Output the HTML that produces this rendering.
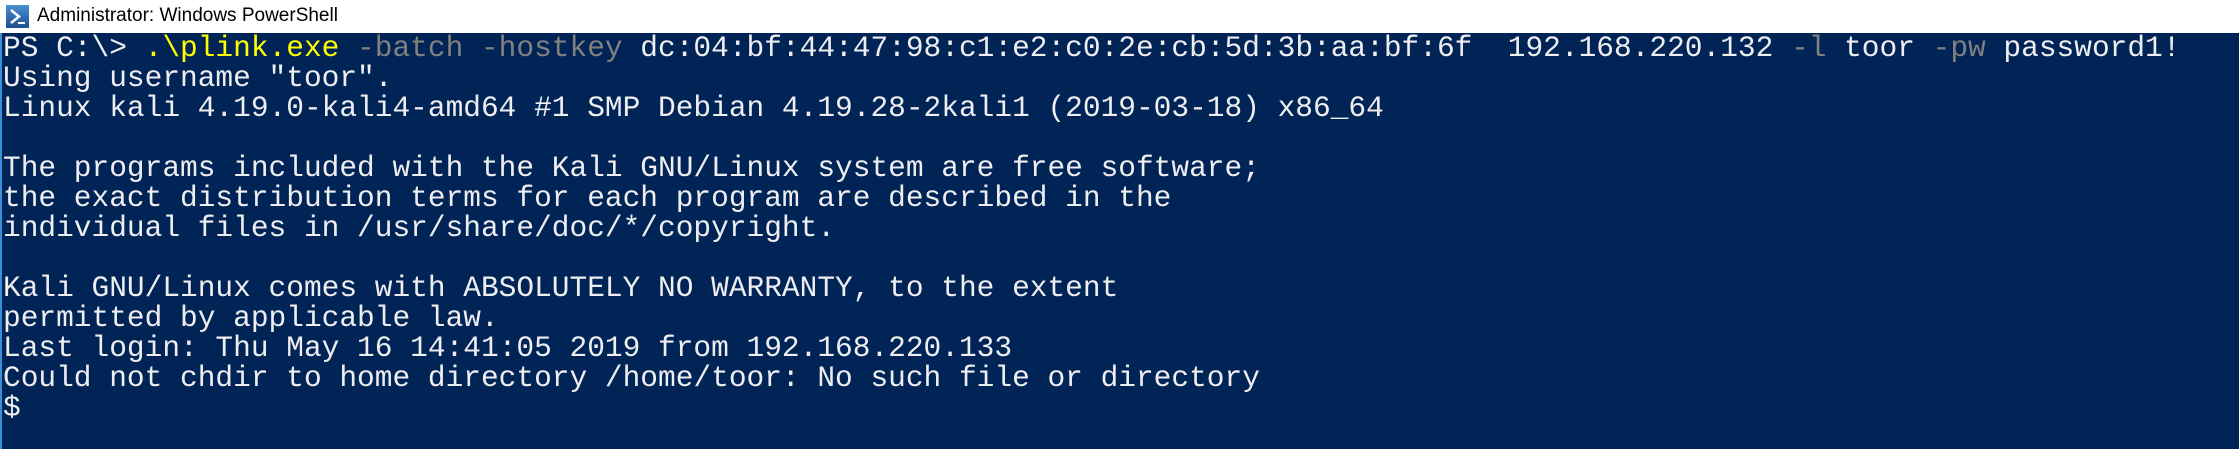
<!DOCTYPE html>
<html><head><style>
html,body{margin:0;padding:0;width:2239px;height:449px;overflow:hidden;background:#fff}
.title{position:absolute;left:0;top:0;width:2239px;height:33px;background:#fff}
.title span{position:absolute;left:37px;top:5px;font:19px "Liberation Sans",sans-serif;color:#000}
.icon{position:absolute;left:6px;top:5px;width:23px;height:23px;background:linear-gradient(#4a8fd4,#1d4f8f);}
.term{position:absolute;left:0;top:33px;width:2239px;height:416px;background:#012456;border-left:2px solid #3a8fd8;box-sizing:border-box}
pre{margin:0;position:absolute;left:1px;top:0;font-family:"Liberation Mono",monospace;font-size:29.5px;letter-spacing:0px;line-height:30px;color:#eeedf0}
.y{color:#ffff00}.g{color:#808080}
</style></head><body>
<div class="title"><div class="icon"><svg width="23" height="23"><path d="M5 5 L13 11.5 L5 18" stroke="#fff" stroke-width="2.5" fill="none"/><path d="M12 18h7" stroke="#fff" stroke-width="2"/></svg></div><span>Administrator: Windows PowerShell</span></div>
<div class="term"><pre>PS C:\&gt; <span class="y">.\plink.exe</span> <span class="g">-batch</span> <span class="g">-hostkey</span> dc:04:bf:44:47:98:c1:e2:c0:2e:cb:5d:3b:aa:bf:6f  192.168.220.132 <span class="g">-l</span> toor <span class="g">-pw</span> password1!
Using username "toor".
Linux kali 4.19.0-kali4-amd64 #1 SMP Debian 4.19.28-2kali1 (2019-03-18) x86_64

The programs included with the Kali GNU/Linux system are free software;
the exact distribution terms for each program are described in the
individual files in /usr/share/doc/*/copyright.

Kali GNU/Linux comes with ABSOLUTELY NO WARRANTY, to the extent
permitted by applicable law.
Last login: Thu May 16 14:41:05 2019 from 192.168.220.133
Could not chdir to home directory /home/toor: No such file or directory
$</pre></div>
</body></html>
